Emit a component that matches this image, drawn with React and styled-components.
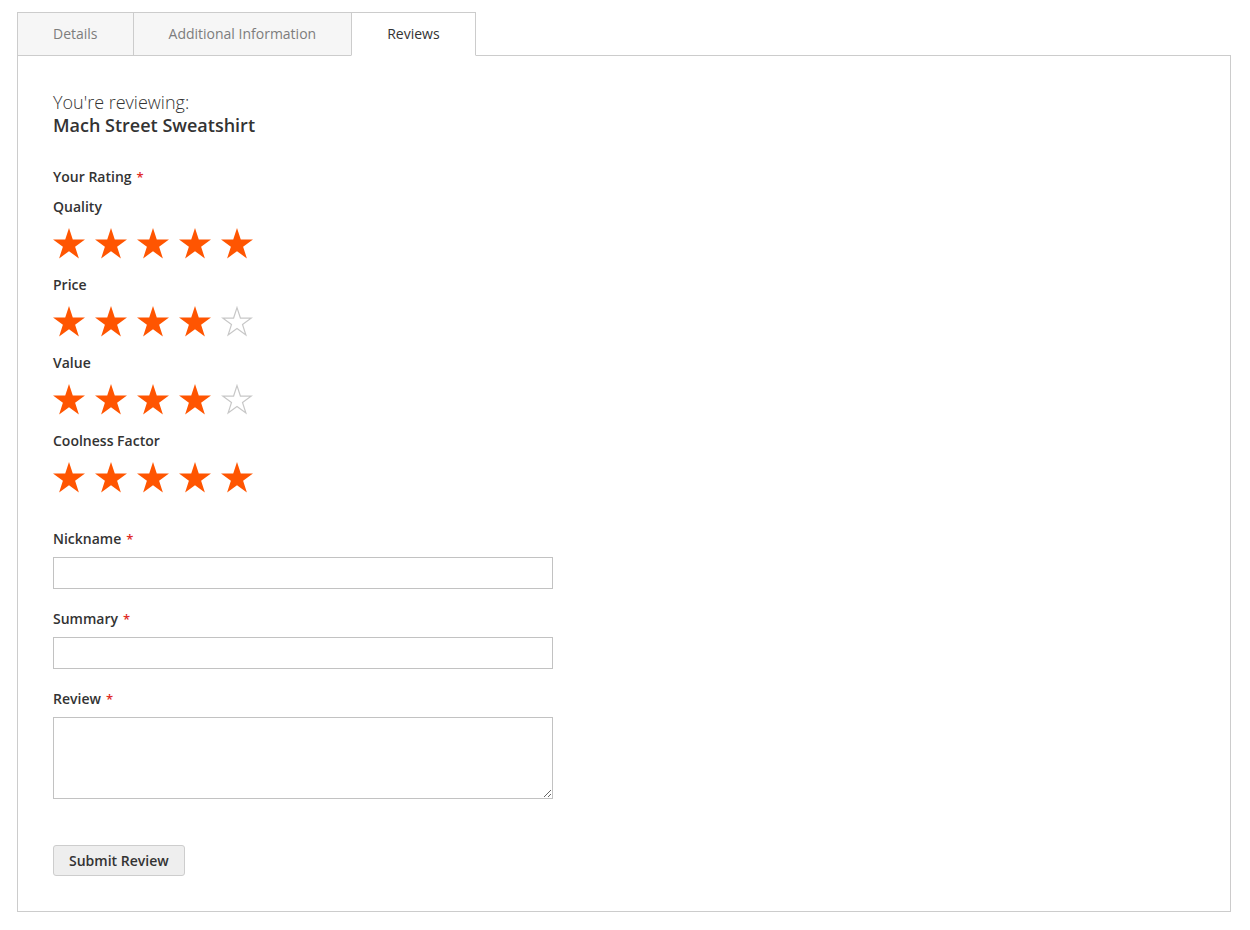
import React from 'react';
import styled, { createGlobalStyle } from 'styled-components';

const GlobalStyle = createGlobalStyle`
  body {
    margin: 0;
    background: #fff;
    font-family: "Open Sans", "Helvetica Neue", Arial, sans-serif;
    color: #333;
  }
`;

const Page = styled.div`
  padding: 12px 19px 18px 17px;
`;

const TabBar = styled.div`
  display: flex;
  position: relative;
  z-index: 1;
`;

const Tab = styled.div`
  box-sizing: border-box;
  height: 44px;
  line-height: 42px;
  padding: 0 35px;
  font-size: 14px;
  border: 1px solid #ccc;
  margin-left: -1px;
  color: ${(p) => (p.$active ? '#333' : '#7d7d7d')};
  background: ${(p) => (p.$active ? '#fff' : '#f6f6f6')};
  border-bottom-color: ${(p) => (p.$active ? '#fff' : '#ccc')};
  &:first-child {
    margin-left: 0;
  }
`;

const Panel = styled.div`
  border: 1px solid #ccc;
  margin-top: -1px;
  padding: 35px;
`;

const Reviewing = styled.div`
  font-size: 18px;
  line-height: 23px;
  font-weight: 300;
  color: #333;
`;

const ProductName = styled.div`
  font-size: 18px;
  line-height: 23px;
  font-weight: 600;
  color: #333;
  margin-bottom: 30px;
`;

const Label = styled.div`
  font-size: 14px;
  line-height: 20px;
  font-weight: 600;
  color: #333;
  margin-bottom: ${(p) => p.$mb || 11}px;
`;

const Required = styled.span`
  color: #e02b27;
  margin-left: 5px;
  font-size: 13px;
`;

const RatingGroup = styled.div`
  margin-bottom: 16px;
`;

const Stars = styled.div`
  display: flex;
  gap: 10px;
  height: 31px;
`;

const Fields = styled.div`
  margin-top: 36px;
`;

const Field = styled.div`
  margin-bottom: 20px;
`;

const Input = styled.input`
  display: block;
  box-sizing: border-box;
  width: 500px;
  height: 32px;
  border: 1px solid #c2c2c2;
  background: #fff;
  margin: 0;
  font-family: inherit;
  font-size: 14px;
  padding: 0 9px;
`;

const TextArea = styled.textarea`
  display: block;
  box-sizing: border-box;
  width: 500px;
  height: 82px;
  border: 1px solid #c2c2c2;
  background: #fff;
  margin: 0;
  font-family: inherit;
  font-size: 14px;
  padding: 9px;
`;

const Actions = styled.div`
  padding-top: 26px;
`;

const SubmitButton = styled.button`
  box-sizing: border-box;
  height: 31px;
  padding: 0 15px;
  background: #eee;
  border: 1px solid #cdcdcd;
  border-radius: 3px;
  font-family: inherit;
  font-size: 14px;
  font-weight: 600;
  color: #333;
  cursor: pointer;
`;

const STAR = '16,0 19.77,11.61 31.98,11.61 22.11,18.78 25.88,30.39 16,23.22 6.12,30.39 9.89,18.78 0.02,11.61 12.23,11.61';

const Star = ({ filled }) => (
  <svg width="32" height="31" viewBox="0 0 32 31">
    {filled ? (
      <polygon points={STAR} fill="#ff5501" />
    ) : (
      <polygon points={STAR} fill="none" stroke="#c7c7c7" strokeWidth="1.3" transform="translate(1.6 1.6) scale(0.9)" />
    )}
  </svg>
);

const ratings = [
  { name: 'Quality', value: 5 },
  { name: 'Price', value: 4 },
  { name: 'Value', value: 4 },
  { name: 'Coolness Factor', value: 5 },
];

const App = () => {
  return (
    <Page>
      <GlobalStyle />
      <TabBar>
        <Tab>Details</Tab>
        <Tab>Additional Information</Tab>
        <Tab $active>Reviews</Tab>
      </TabBar>
      <Panel>
        <Reviewing>You're reviewing:</Reviewing>
        <ProductName>Mach Street Sweatshirt</ProductName>

        <Label $mb={10}>
          Your Rating<Required>*</Required>
        </Label>
        {ratings.map((r) => (
          <RatingGroup key={r.name}>
            <Label>{r.name}</Label>
            <Stars>
              {[1, 2, 3, 4, 5].map((i) => (
                <Star key={i} filled={i <= r.value} />
              ))}
            </Stars>
          </RatingGroup>
        ))}

        <Fields>
          <Field>
            <Label $mb={8}>
              Nickname<Required>*</Required>
            </Label>
            <Input type="text" />
          </Field>
          <Field>
            <Label $mb={8}>
              Summary<Required>*</Required>
            </Label>
            <Input type="text" />
          </Field>
          <Field>
            <Label $mb={8}>
              Review<Required>*</Required>
            </Label>
            <TextArea />
          </Field>
        </Fields>

        <Actions>
          <SubmitButton>Submit Review</SubmitButton>
        </Actions>
      </Panel>
    </Page>
  );
};

export default App;
